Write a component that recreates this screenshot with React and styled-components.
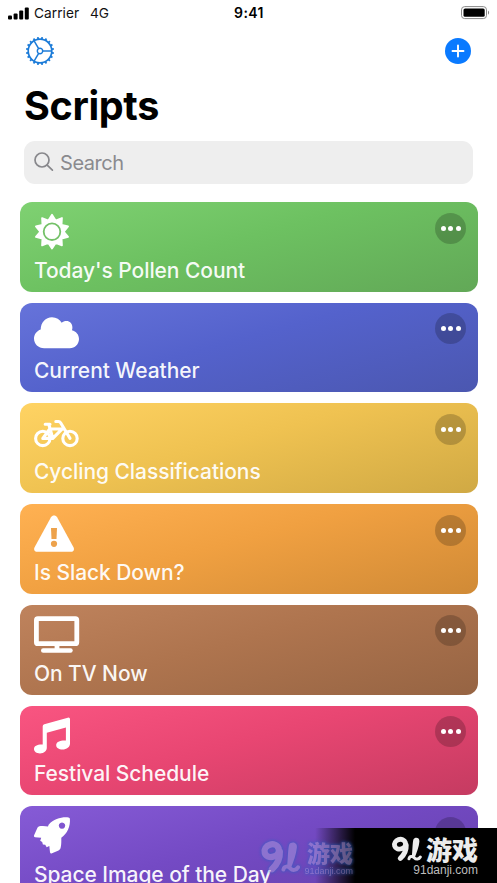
import React from "react";
import styled, { createGlobalStyle } from "styled-components";

const GlobalStyle = createGlobalStyle`
  * { box-sizing: border-box; }
  body { margin: 0; background: #fff; overflow: hidden; }
`;

const Screen = styled.main`
  position: relative;
  width: 497px;
  height: 883px;
  overflow: hidden;
  background: #fff;
  font-family: Inter, "Liberation Sans", sans-serif;
  display: flex;
  flex-direction: column;
`;

const StatusBar = styled.header`
  display: grid;
  grid-template-columns: 1fr auto 1fr;
  align-items: center;
  height: 26px;
  padding: 0 7px 0 8px;
  font-size: 13.7px;
  line-height: 26px;
  color: #111;
  flex: none;
`;

const Carrier = styled.div`
  display: flex;
  align-items: center;
`;

const CarrierName = styled.span`
  margin-left: 5px;
  width: 56px;
  letter-spacing: 0.05px;
`;

const Time = styled.time`
  font-size: 14px;
  font-weight: 600;
  letter-spacing: 0.4px;
  color: #000;
`;

const BatterySlot = styled.div`
  display: flex;
  justify-content: flex-end;
`;

const NavBar = styled.nav`
  display: flex;
  justify-content: space-between;
  align-items: center;
  height: 50px;
  padding: 0 26px 0 25px;
  flex: none;
`;

const IconButton = styled.button`
  display: flex;
  padding: 0;
  border: 0;
  background: none;
`;

const Title = styled.h1`
  margin: 0;
  height: 65px;
  padding: 4px 0 0 24px;
  font-size: 39.5px;
  line-height: 52px;
  font-weight: 700;
  letter-spacing: -0.35px;
  color: #000;
  flex: none;
`;

const SearchField = styled.div`
  display: flex;
  align-items: center;
  height: 42.5px;
  margin: 0 24px 18.5px;
  padding-left: 9.5px;
  gap: 6.5px;
  border-radius: 11px;
  background: #eee;
  color: #8a8a8e;
  font-size: 20px;
  letter-spacing: -0.45px;
  flex: none;
`;

const SearchPlaceholder = styled.span`
  padding-top: 2px;
`;

const CardList = styled.section`
  display: flex;
  flex-direction: column;
  gap: 11.05px;
  padding: 0 19.5px;
`;

const Card = styled.article`
  display: flex;
  justify-content: space-between;
  height: 89.7px;
  padding: 10px 11.2px 0 14.5px;
  border-radius: 12px;
  background: linear-gradient(165deg, ${(p) => p.$from}, ${(p) => p.$mid} 45%, ${(p) => p.$to});
  flex: none;
`;

const CardBody = styled.div`
  display: flex;
  flex-direction: column;
  color: #fff;
`;

const CardLabel = styled.h2`
  margin: 4.6px 0 0;
  font-size: 21px;
  line-height: 28px;
  font-weight: 540;
  letter-spacing: -0.07px;
  white-space: nowrap;
  color: rgba(255, 255, 255, 0.94);
`;

const MoreButton = styled.button`
  display: flex;
  align-items: center;
  justify-content: center;
  gap: 2.2px;
  width: 31px;
  height: 31px;
  margin-top: 0.5px;
  padding: 0;
  border: 0;
  border-radius: 50%;
  background: rgba(0, 0, 0, 0.2);
`;

const Dot = styled.span`
  width: 5px;
  height: 5px;
  border-radius: 50%;
  background: #fff;
`;

const Watermark = styled.aside`
  position: absolute;
  right: 0;
  bottom: 0;
  width: 182px;
  height: 55px;
  padding: 7px 19px 0 0;
  background: linear-gradient(90deg, transparent, #000 40px);
  display: flex;
  flex-direction: column;
  align-items: flex-end;
`;

const GhostMark = styled.aside`
  position: absolute;
  left: 260px;
  top: 840px;
  width: 93px;
  display: flex;
  justify-content: space-between;
  color: #a79ade;
  opacity: 0.52;
  filter: drop-shadow(0 0 1.5px #2b62c4) drop-shadow(0 0 1.5px #2b62c4);
`;

const GhostText = styled.div`
  display: flex;
  flex-direction: column;
  align-items: flex-end;
`;

const BrandRow = styled.div`
  display: flex;
  align-items: center;
  gap: 4px;
  height: 28px;
  color: #ececec;
`;

const BrandName = styled.span`
  font: 900 ${(p) => p.$size}px / ${(p) => p.$line}px "Noto Sans CJK SC", sans-serif;
`;

const BrandUrl = styled.span`
  font: ${(p) => p.$size}px/13px "Liberation Sans", sans-serif;
`;

const UrlTone = styled.div`
  display: flex;
  padding-top: 0.5px;
  color: #bdbdbd;
`;

const Signal = () => (
  <svg width="21" height="13" viewBox="0 0 21 13">
    <rect x="0" y="8.5" width="4" height="4" rx="1" />
    <rect x="5.6" y="6.4" width="4" height="6.1" rx="1" />
    <rect x="11.2" y="3.6" width="4" height="8.9" rx="1" />
    <rect x="16.8" y="0.4" width="4" height="12.1" rx="1" />
  </svg>
);

const Battery = () => (
  <svg width="30" height="14" viewBox="0 0 30 14">
    <rect x="1.5" y="0.6" width="25" height="12" rx="3.2" fill="none" stroke="#888" />
    <rect x="3.5" y="2.4" width="21.2" height="8.4" rx="1.6" />
    <path d="M28 4.5c1.5.8 1.5 3.4 0 4.2z" fill="#888" />
  </svg>
);

const gearTeeth = Array.from({ length: 20 }, (_, i) => i * 18 + 9);

const Gear = () => (
  <svg width="30" height="30" viewBox="-15 -15 30 30" fill="none" stroke="#1b7bd8">
    <circle r="11.8" strokeWidth="1.7" />
    <circle r="2.7" strokeWidth="1.4" />
    {gearTeeth.map((a) => (
      <path key={a} d="M12 0H14" strokeWidth="1.8" transform={`rotate(${a})`} />
    ))}
    {[0, 120, 240].map((a) => (
      <path key={a} d="M2.7 0H11.5" strokeWidth="1.5" transform={`rotate(${a})`} />
    ))}
  </svg>
);

const Plus = () => (
  <svg width="26" height="26" viewBox="0 0 26 26">
    <circle cx="13" cy="13" r="13" fill="#0a7aff" />
    <path d="M13 7.5v11M7.5 13h11" stroke="#fff" strokeWidth="1.9" strokeLinecap="round" />
  </svg>
);

const Magnifier = () => (
  <svg width="20" height="20" viewBox="0 0 20 20" fill="none" stroke="#88888c" strokeWidth="1.7" strokeLinecap="round">
    <circle cx="8" cy="8" r="7" />
    <path d="M13.2 13.2L18.4 18.2" />
  </svg>
);

const sunPoints = Array.from({ length: 20 }, (_, i) => {
  const r = i % 2 ? 11.8 : 16.9;
  const a = (i * Math.PI) / 10;
  return `${(18 + r * Math.sin(a)).toFixed(2)},${(19.7 - r * Math.cos(a)).toFixed(2)}`;
}).join(" ");

const glyphs = {
  sun: (
    <>
      <polygon points={sunPoints} fill="currentColor" stroke="currentColor" strokeWidth="1.8" strokeLinejoin="round" />
      <circle cx="18" cy="19.7" r="8.3" fill="none" stroke="#74c168" strokeWidth="1.8" />
    </>
  ),
  cloud: (
    <path
      fill="currentColor"
      d="M10.2 35.3C4.4 35.3 0 31 0 25.6c0-4.2 2.7-7.8 6.7-9.2C6.8 9.6 11.7 4.3 18 4.3c4.4 0 7.7 2.2 9.7 5.5 1.2-1 2.9-1.7 4.7-1.7 3.4 0 6 2.7 6 6.3 0 1-.1 2-.5 2.9 4.2.9 7.1 4.5 7.1 8.8 0 5.1-4.1 9.2-9.2 9.2z"
    />
  ),
  bike: (
    <g fill="none" stroke="currentColor" strokeWidth="3.1" strokeLinecap="round" strokeLinejoin="round">
      <circle cx="8.8" cy="25.4" r="7.2" />
      <circle cx="36" cy="25.4" r="7.2" />
      <path d="M11.2 11.3H16M21.8 8.5H24.5Q25.8 8.5 26.6 9.8L36 25.4M15 12L18.8 25.4H8.8L15.7 16H28.5M18.8 25.4L28.5 15.6" />
    </g>
  ),
  warning: (
    <>
      <path
        fill="currentColor"
        d="M17 3.2C18.4.8 21.7.8 23.1 3.2L39.5 33.2C40.7 35.5 39.5 37.8 37 37.8H3.1C.6 37.8-.6 35.5.6 33.2Z"
      />
      <path d="M17 14h6l-.5 11h-5z" fill="#eda24b" />
      <circle cx="20" cy="29.8" r="3.1" fill="#eda24b" />
    </>
  ),
  tv: (
    <>
      <rect x="2.4" y="3.7" width="40.4" height="25" rx="1.5" fill="none" stroke="currentColor" strokeWidth="4.8" />
      <path d="M20.6 30h4.8v4h-4.8z" fill="currentColor" />
      <rect x="7" y="33.2" width="31.7" height="4.6" rx="2.2" fill="currentColor" />
    </>
  ),
  music: (
    <path
      fill="currentColor"
      d="M10.3 8.2L33.8 1.7Q36 1.2 36 3.3V27.5C36 31 32.6 33.5 28.5 33.5C24.8 33.5 22.2 31.8 22.2 29.2C22.2 26 26 24.3 31.9 24.6V11.6L12.8 16.8V31.8C12.8 35.1 9.7 37.4 6 37.4C2.5 37.4 0 35.7 0 33.1C0 29.9 3.2 28.4 8.7 28.6V10.2Q8.7 8.7 10.3 8.2Z"
    />
  ),
  rocket: (
    <path
      fill="currentColor"
      fillRule="evenodd"
      d="M14.6 8.8C20 2.6 27.5.8 34.5 1.4Q35.8 1.5 35.9 2.8C36.5 10.500 33.3 17.5 27.3 21.8C27.3 25 27.5 28 26.7 31.5C26.3 33.3 25.4 34 24 34.7L18 37.3Q16.4 38 16 36.3L15.3 30.1L12.7 31.2L11.2 28.8L8.9 28.4L8.2 26L6.2 24.8L7.2 21.7L1 21.2Q-.7 20.9.1 19.2L3 12.7C3.7 11 4.7 10.3 6.7 10.1C9.3 9.8 12 10.1 14 10.6ZM28 6.4a3.2 3.2 0 1 0 .01 0z"
    />
  ),
};

const Glyph = ({ name }) => (
  <svg width="46" height="40" viewBox="0 0 46 40" overflow="visible">
    {glyphs[name]}
  </svg>
);

const BrandMark = ({ scale = 1 }) => (
  <svg width={31 * scale} height={26 * scale} viewBox="0 0 31 26" fill="none" stroke="currentColor" strokeLinecap="round">
    <ellipse cx="9" cy="8.2" rx="5.6" ry="4.8" strokeWidth="4.9" transform="rotate(-18 9 8.2)" />
    <path d="M15.2 9C15.5 15 12.500 19.500 9.300 22.400" strokeWidth="5" />
    <path d="M22.400 3.600C23.500 1 28.700 1 28.400 5.500C28 10.500 25.800 16.500 23.800 21.500L20.800 21C21.500 15 21.400 7.500 22.400 3.600Z" fill="currentColor" stroke="none" />
    <path d="M18 22.800C18.500 19.800 21.500 19.800 23.500 22C25 23.600 28 23.400 29.300 21" strokeWidth="3" />
  </svg>
);

const scripts = [
  { icon: "sun", label: "Today's Pollen Count", from: "#7fd172", mid: "#6dc161", to: "#62a857" },
  { icon: "cloud", label: "Current Weather", from: "#6673da", mid: "#5462cc", to: "#4b57b0" },
  { icon: "bike", label: "Cycling Classifications", from: "#ffd363", mid: "#efc251", to: "#d0a944" },
  { icon: "warning", label: "Is Slack Down?", from: "#ffb152", mid: "#f0a041", to: "#d08a36" },
  { icon: "tv", label: "On TV Now", from: "#bf835d", mid: "#ae744e", to: "#966443" },
  { icon: "music", label: "Festival Schedule", from: "#f95581", mid: "#e84672", to: "#c53b61" },
  { icon: "rocket", label: "Space Image of the Day", from: "#865bd6", mid: "#744ac4", to: "#6440aa" },
];

export default function App() {
  return (
    <Screen>
      <GlobalStyle />
      <StatusBar>
        <Carrier>
          <Signal />
          <CarrierName>Carrier</CarrierName>
          <span>4G</span>
        </Carrier>
        <Time>9:41</Time>
        <BatterySlot>
          <Battery />
        </BatterySlot>
      </StatusBar>
      <NavBar>
        <IconButton aria-label="Settings">
          <Gear />
        </IconButton>
        <IconButton aria-label="Add script">
          <Plus />
        </IconButton>
      </NavBar>
      <Title>Scripts</Title>
      <SearchField>
        <Magnifier />
        <SearchPlaceholder>Search</SearchPlaceholder>
      </SearchField>
      <CardList>
        {scripts.map((s) => (
          <Card key={s.icon} $from={s.from} $mid={s.mid} $to={s.to}>
            <CardBody>
              <Glyph name={s.icon} />
              <CardLabel>{s.label}</CardLabel>
            </CardBody>
            <MoreButton aria-label="More">
              <Dot />
              <Dot />
              <Dot />
            </MoreButton>
          </Card>
        ))}
      </CardList>
      <Watermark>
        <BrandRow>
          <BrandMark />
          <BrandName $size={26} $line={28}>游戏</BrandName>
        </BrandRow>
        <UrlTone>
          <BrandUrl $size={12}>91danji.com</BrandUrl>
        </UrlTone>
      </Watermark>
      <GhostMark>
        <BrandMark scale={1.3} />
        <GhostText>
          <BrandName $size={23} $line={25}>游戏</BrandName>
          <BrandUrl $size={9}>91danji.com</BrandUrl>
        </GhostText>
      </GhostMark>
    </Screen>
  );
}
